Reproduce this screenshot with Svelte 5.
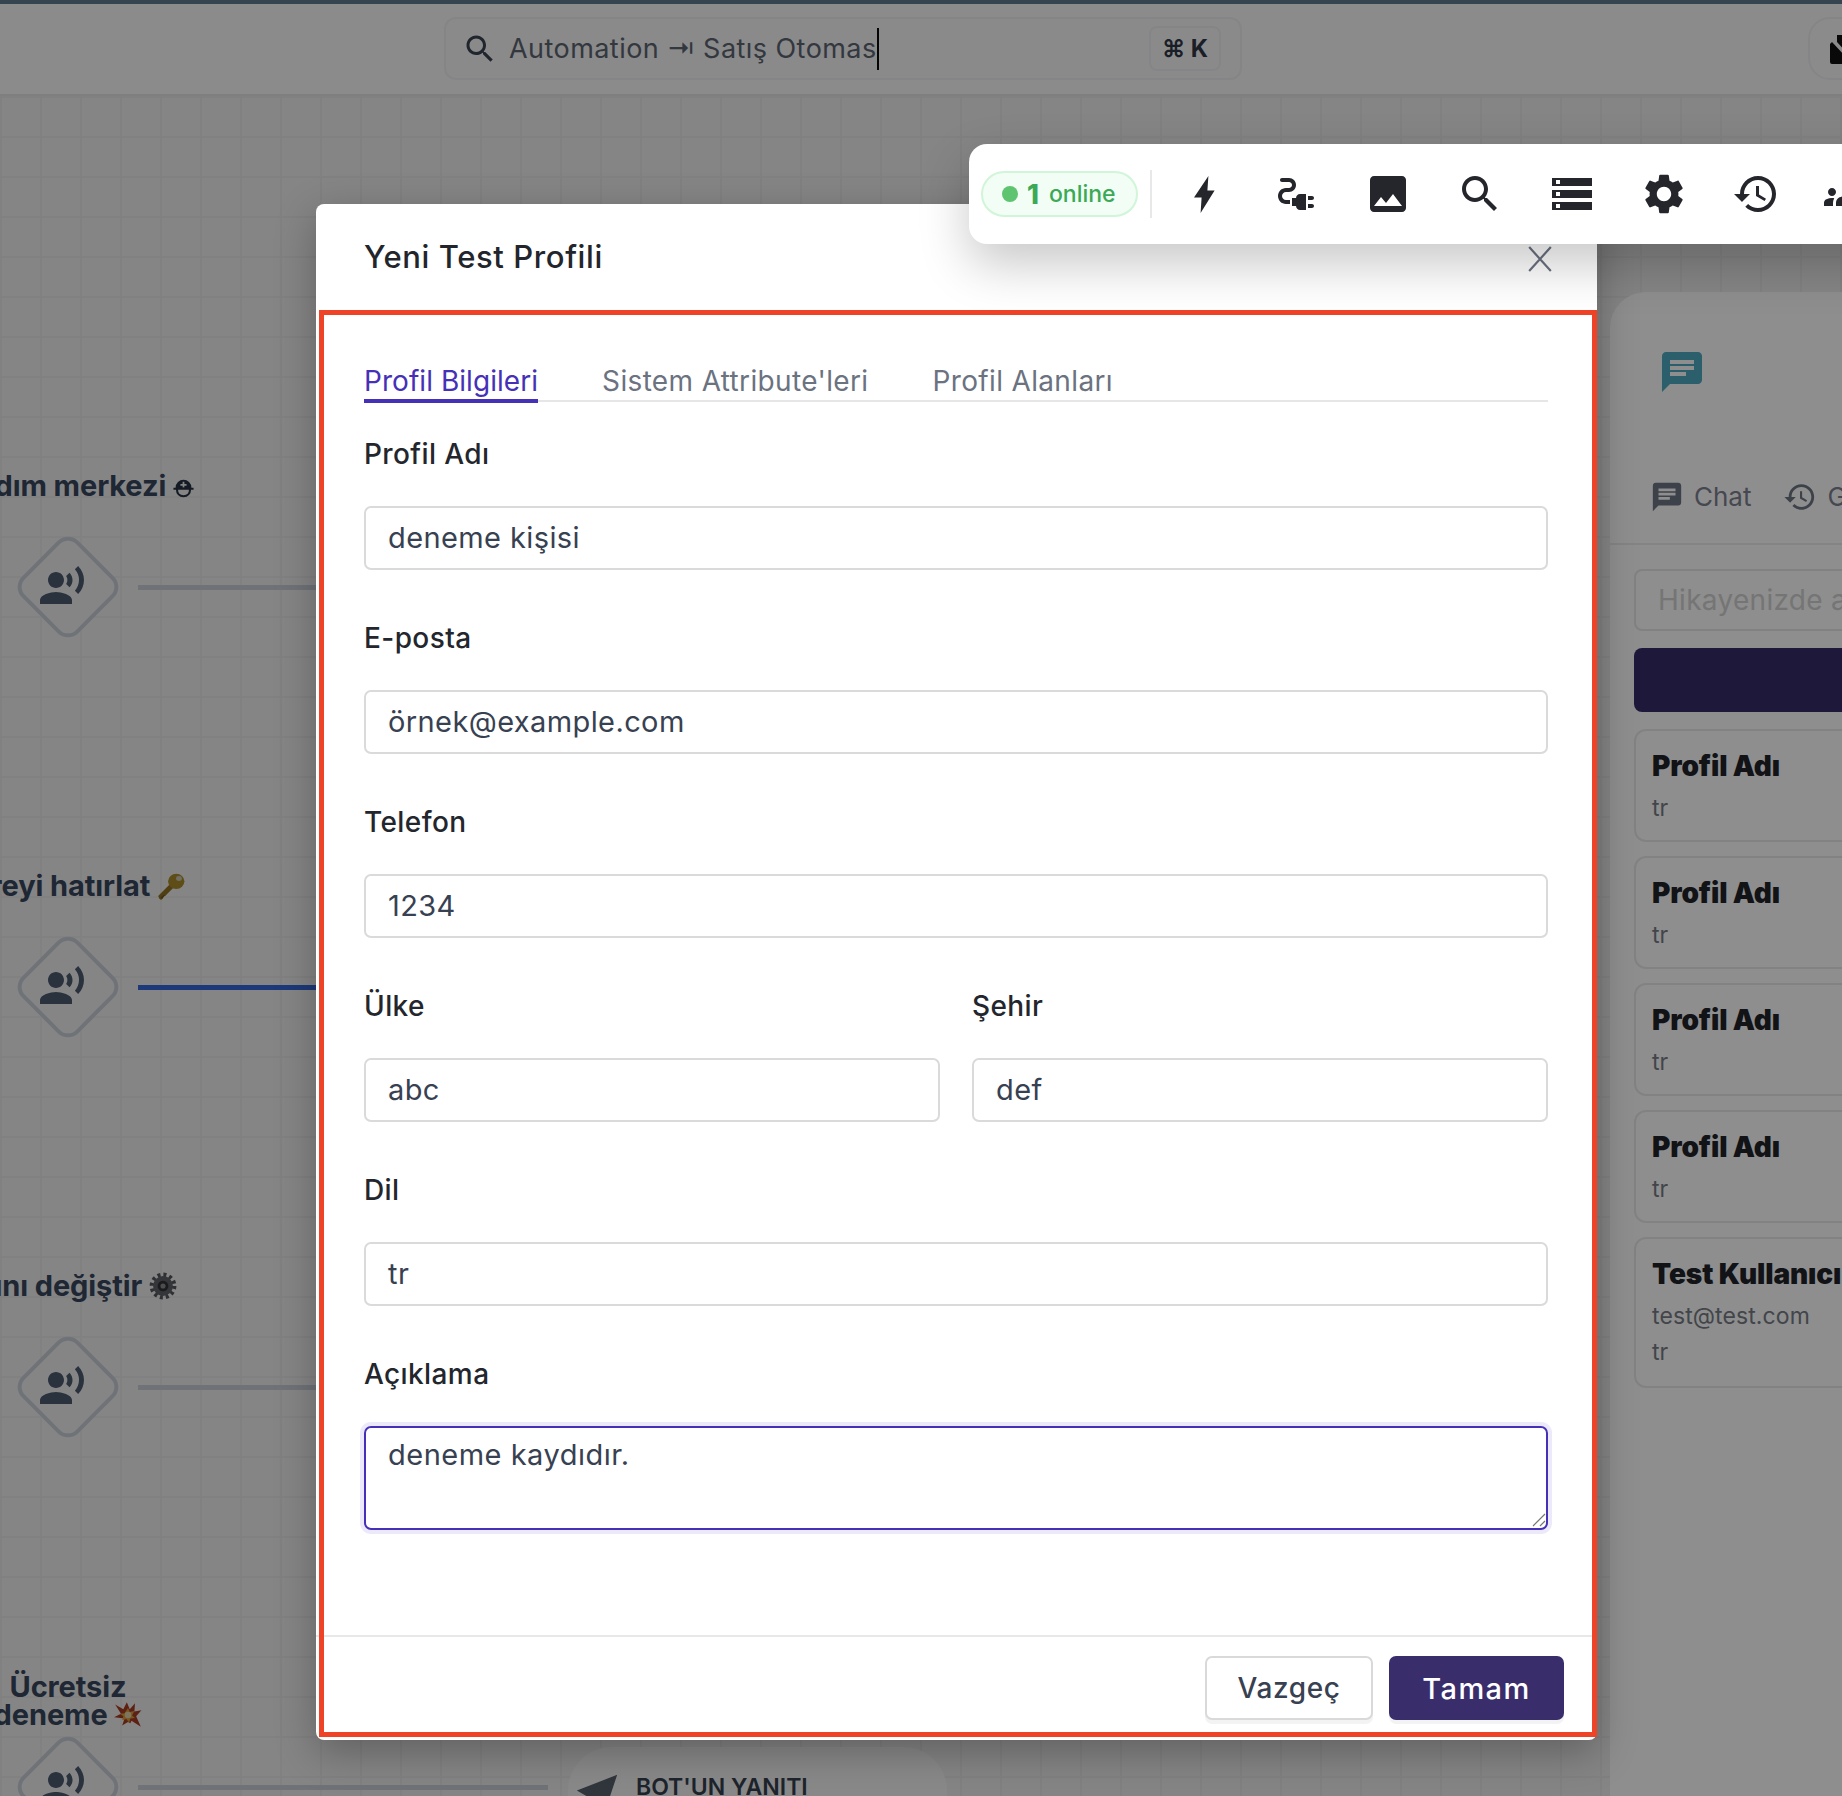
<script>
  const nodes = [
    { lines: ['Yardım merkezi'], emoji: 'helmet', y: 587, labelY: 486, line: '#c7ced6', width: 180, right: 194 },
    { lines: ['Şifreyi hatırlat'], emoji: 'key', y: 987, labelY: 886, line: '#3567d8', width: 180, right: 185 },
    { lines: ['Adını değiştir'], emoji: 'gear', y: 1387, labelY: 1286, line: '#c7ced6', width: 180, right: 177 },
    { lines: ['Ücretsiz', 'deneme'], emoji: 'boom', y: 1787, labelY: 1687, line: '#c7ced6', width: 410, right: 145, center: true }
  ];
  const fields = [
    { label: 'Profil Adı', value: 'deneme kişisi' },
    { label: 'E-posta', value: 'örnek@example.com' },
    { label: 'Telefon', value: '1234' }
  ];
  const cards = [
    { title: 'Profil Adı', lines: ['tr'] },
    { title: 'Profil Adı', lines: ['tr'] },
    { title: 'Profil Adı', lines: ['tr'] },
    { title: 'Profil Adı', lines: ['tr'] },
    { title: 'Test Kullanıcı', lines: ['test@test.com', 'tr'] }
  ];
  const P = {
    plug: 'M21 14c0-.55-.45-1-1-1h-2v2h2c.55 0 1-.45 1-1zm-1 3h-2v2h2c.55 0 1-.45 1-1s-.45-1-1-1zm-8-3h-2v4h2c0 1.1.9 2 2 2h3v-8h-3c-1.1 0-2 .9-2 2zM5 13c0-1.1.9-2 2-2h1.5c1.93 0 3.5-1.57 3.5-3.5S10.43 4 8.5 4H5c-.55 0-1 .45-1 1s.45 1 1 1h3.5c.83 0 1.5.67 1.5 1.5S9.33 9 8.5 9H7c-2.21 0-4 1.79-4 4s1.79 4 4 4h2v-2H7c-1.1 0-2-.9-2-2z',
    image: 'M21 19V5c0-1.1-.9-2-2-2H5c-1.1 0-2 .9-2 2v14c0 1.1.9 2 2 2h14c1.1 0 2-.9 2-2zM8.5 13.5l2.5 3.01L14.5 12l4.5 6H5l3.5-4.5z',
    search: 'M15.5 14h-.79l-.28-.27C15.41 12.59 16 11.11 16 9.5 16 5.91 13.09 3 9.5 3S3 5.91 3 9.5 5.91 16 9.5 16c1.61 0 3.09-.59 4.23-1.57l.27.28v.79l5 4.99L20.49 19l-4.99-5zm-6 0C7.01 14 5 11.99 5 9.5S7.01 5 9.5 5 14 7.01 14 9.5 11.99 14 9.5 14z',
    storage: 'M2 20h20v-4H2v4zm2-3h2v2H4v-2zM2 4v4h20V4H2zm4 3H4V5h2v2zm-4 7h20v-4H2v4zm2-3h2v2H4v-2z',
    settings: 'M19.14 12.94c.04-.3.06-.61.06-.94 0-.32-.02-.64-.07-.94l2.03-1.58c.18-.14.23-.41.12-.61l-1.92-3.32c-.12-.22-.37-.29-.59-.22l-2.39.96c-.5-.38-1.03-.7-1.62-.94l-.36-2.54c-.04-.24-.24-.41-.48-.41h-3.84c-.24 0-.43.17-.47.41l-.36 2.54c-.59.24-1.13.57-1.62.94l-2.39-.96c-.22-.08-.47 0-.59.22L2.74 8.87c-.12.21-.08.47.12.61l2.03 1.58c-.05.3-.09.63-.09.94s.02.64.07.94l-2.03 1.58c-.18.14-.23.41-.12.61l1.92 3.32c.12.22.37.29.59.22l2.39-.96c.5.38 1.03.7 1.62.94l.36 2.54c.05.24.24.41.48.41h3.84c.24 0 .44-.17.47-.41l.36-2.54c.59-.24 1.13-.56 1.62-.94l2.39.96c.22.08.47 0 .59-.22l1.92-3.32c.12-.22.07-.47-.12-.61l-2.01-1.58zM12 15.6c-1.98 0-3.6-1.62-3.6-3.6s1.62-3.6 3.6-3.6 3.6 1.62 3.6 3.6-1.62 3.6-3.6 3.6z',
    history: 'M13 3c-4.97 0-9 4.03-9 9H1l3.89 3.89.07.14L9 12H6c0-3.87 3.13-7 7-7s7 3.13 7 7-3.13 7-7 7c-1.93 0-3.68-.79-4.94-2.06l-1.42 1.42C8.27 19.99 10.51 21 13 21c4.97 0 9-4.03 9-9s-4.03-9-9-9zm-1 5v5l4.28 2.54.72-1.21-3.5-2.08V8H12z',
    groups: 'M12 12.75c1.63 0 3.07.39 4.24.9 1.08.48 1.76 1.56 1.76 2.73V18H6v-1.61c0-1.18.68-2.26 1.76-2.73 1.17-.52 2.61-.91 4.24-.91zM4 13c1.1 0 2-.9 2-2s-.9-2-2-2-2 .9-2 2 .9 2 2 2zm1.13 1.1C4.76 14.04 4.39 14 4 14c-.99 0-1.93.21-2.78.58C.48 14.9 0 15.62 0 16.43V18h4.5v-1.61c0-.83.23-1.61.63-2.29zM20 13c1.1 0 2-.9 2-2s-.9-2-2-2-2 .9-2 2 .9 2 2 2zm4 3.43c0-.81-.48-1.53-1.22-1.85C21.93 14.21 20.99 14 20 14c-.39 0-.76.04-1.13.1.4.68.63 1.46.63 2.29V18H24v-1.57zM12 6c1.66 0 3 1.34 3 3s-1.34 3-3 3-3-1.34-3-3 1.34-3 3-3z',
    chat: 'M20 2H4c-1.1 0-1.99.9-1.99 2L2 22l4-4h14c1.1 0 2-.9 2-2V4c0-1.1-.9-2-2-2zM6 9h12v2H6V9zm8 5H6v-2h8v2zm4-6H6V6h12v2z',
    voice: 'M9 13c2.21 0 4-1.79 4-4s-1.79-4-4-4-4 1.79-4 4 1.79 4 4 4zm0 2c-2.67 0-8 1.34-8 4v2h16v-2c0-2.66-5.33-4-8-4zm6.76-9.64l-1.68 1.69c.84 1.18.84 2.71 0 3.89l1.68 1.69c2.02-2.02 2.02-5.07 0-7.27zM20.07 2l-1.63 1.63c2.77 3.02 2.77 7.56 0 10.74L20.07 16c3.9-3.89 3.91-9.95 0-14z',
    bolt: 'M14.2 3 7 13.8h3.800L10.300 21.500l7-11.200h-3.600z'
  };
  const tools = [P.bolt, P.plug, P.image, P.search, P.storage, P.settings, P.history, P.groups];
</script>

<div class="page">
  <header class="topbar">
    <div class="search">
      <svg class="search-icon" viewBox="0 0 24 24"><path d={P.search} /></svg>
      <span class="search-text">Automation ⇥ Satış Otomas</span><span class="caret"></span>
      <kbd class="kbd">⌘ K</kbd>
    </div>
    <div class="corner">
      <svg viewBox="0 0 34 34" class="corner-icon">
        <path d="M1 11v18a2 2 0 0 0 2 2h30V24L17 24 3 9z" />
        <path d="M8 2h26v20H20L8 9z" />
        <path d="M22 7h12M22 12h12" stroke="#f8f8fa" stroke-width="2.500" fill="none" />
      </svg>
    </div>
  </header>

  <main class="canvas">
    {#each nodes as n}
      <div class="node-label" class:center={n.center} style="top:{n.labelY - 96 - 14}px;left:{n.right - 300}px">
        {#each n.lines as l, i}
          <div>{l}
            {#if i === n.lines.length - 1}
              {#if n.emoji === 'helmet'}
                <svg class="emoji helmet" viewBox="0 0 24 24"><path d="M3 13v-1a9 9 0 0 1 18 0v1zM11 5.500v2.500H8.500v2H11v2h2v-2h2.500V8H13V5.500z" fill-rule="evenodd" fill="#253040" /><path d="M.500 13.500h23M4.500 14c0 5 3 8 7.500 8s7.500-3 7.500-8" fill="none" stroke="#253040" stroke-width="2.400" /></svg>
              {:else if n.emoji === 'key'}
                <svg class="emoji" viewBox="0 0 24 24"><path d="M1 20.500 11 10.500l3 3-7 7-1-1-1.500 1.500 1 1-2 2-1.500-1z" fill="#8f7020" /><path d="M3 22 6 19l1 1-2.500 3z" fill="#6e5618" /><ellipse cx="16.500" cy="8" rx="7" ry="6.500" fill="#a98a2a" /><ellipse cx="18.800" cy="5.600" rx="2.500" ry="2.100" fill="#c9c6b4" /></svg>
              {:else if n.emoji === 'gear'}
                <svg class="emoji" viewBox="0 0 24 24"><circle cx="12" cy="12" r="9.500" fill="none" stroke="#55575c" stroke-width="4" stroke-dasharray="2.500 2.480" /><circle cx="12" cy="12" r="8.500" fill="#5f6166" /><circle cx="12" cy="12" r="4.600" fill="#2f3135" /><circle cx="12" cy="12" r="2.200" fill="#8a8a8a" /></svg>
              {:else}
                <svg class="emoji" viewBox="0 0 24 24"><path d="m11 1 2.500 6L18 2l-.5 7 6-1-4.500 5 4 9-8-5-1 2-2-1-5 3 2-6-9-1 6-3-5-8 7 4z" fill="#a63c22" /><path d="m12 6 1.500 3.500 4-1-2 4 2.500 2-4 .5-1 3.500-2.500-3-3.500 1 1-3.500-3-2 4-.5z" fill="#d99a3a" /><circle cx="12" cy="12" r="2.800" fill="#dbd3a6" /></svg>
              {/if}
            {/if}
          </div>
        {/each}
      </div>
      <div class="diamond" style="top:{n.y - 96 - 50}px">
        <span class="diamond-shape"></span>
        <svg viewBox="0 0 24 24" class="voice"><path d={P.voice} /></svg>
      </div>
      <div class="link" style="top:{n.y - 96 - 2.5}px;width:{n.width}px;background:{n.line}"></div>
    {/each}

    <div class="bot">
      <svg viewBox="0 0 24 24" class="plane"><path d="M23 1 1 9.500l6 3.500 1 8 4-5 5 3z" /></svg>
      <span>BOT'UN YANITI</span>
    </div>

    <aside class="panel">
      <svg viewBox="0 0 24 24" class="panel-logo"><path d={P.chat} /></svg>
      <nav class="panel-tabs">
        <span class="panel-tab"><svg viewBox="0 0 24 24"><path d={P.chat} /></svg>Chat</span>
        <span class="panel-tab"><svg viewBox="0 0 24 24"><path d={P.history} /></svg>Geçmiş</span>
      </nav>
      <div class="panel-body">
        <div class="panel-input">Hikayenizde ara</div>
        <div class="panel-btn"></div>
        {#each cards as c}
          <div class="card">
            <div class="card-title">{c.title}</div>
            {#each c.lines as l}<div class="card-line">{l}</div>{/each}
          </div>
        {/each}
      </div>
    </aside>
  </main>

  <div class="backdrop"></div>

  <section class="modal">
    <div class="modal-head">
      <h2>Yeni Test Profili</h2>
      <svg viewBox="0 0 24 24" class="close"><path d="M2 1l20 22M22 1 2 23" /></svg>
    </div>
    <div class="modal-body">
      <div class="tabs">
        <span class="tab active">Profil Bilgileri</span>
        <span class="tab">Sistem Attribute'leri</span>
        <span class="tab">Profil Alanları</span>
      </div>
      <div class="fields">
        {#each fields as f}
          <div class="field">
            <div class="label">{f.label}</div>
            <div class="input">{f.value}</div>
          </div>
        {/each}
        <div class="row">
          <div class="field">
            <div class="label">Ülke</div>
            <div class="input">abc</div>
          </div>
          <div class="field">
            <div class="label">Şehir</div>
            <div class="input">def</div>
          </div>
        </div>
        <div class="field">
          <div class="label">Dil</div>
          <div class="input">tr</div>
        </div>
        <div class="field">
          <div class="label">Açıklama</div>
          <div class="textarea">
            deneme kaydıdır.
            <svg viewBox="0 0 14 14" class="grip"><path d="M13 1 1 13M13 8 8 13" /></svg>
          </div>
        </div>
      </div>
    </div>
    <div class="modal-foot">
      <button class="btn ghost">Vazgeç</button>
      <button class="btn primary">Tamam</button>
    </div>
  </section>

  <div class="annotation"></div>

  <div class="toolbar">
    <div class="pill"><i class="dot"></i><b>1</b><span>online</span></div>
    <i class="sep"></i>
    {#each tools as t}
      <span class="tool"><svg viewBox="0 0 24 24"><path d={t} /></svg></span>
    {/each}
  </div>
</div>

<style>
  :global(body) { margin: 0; font-family: Inter, "Noto Sans", sans-serif; }
  .page { position: relative; width: 1842px; height: 1796px; overflow: hidden; display: flex; flex-direction: column; background: #eeeeee; }
  .topbar { flex: none; height: 96px; box-sizing: border-box; border-top: 4px solid #5f7b8e; border-bottom: 2px solid #e3e3e3; background: #f8f8fa; display: flex; align-items: flex-start; padding: 13px 0 0 444px; }
  .search { flex: none; width: 798px; height: 63px; box-sizing: border-box; border: 2px solid #eeeef0; border-radius: 12px; display: flex; align-items: center; padding-left: 16px; background: #f6f6f8; }
  .search-icon { width: 36px; height: 36px; fill: #3b4350; flex: none; }
  .search-text { margin-left: 11px; font-size: 27px; letter-spacing: .45px; color: #5b6470; white-space: nowrap; }
  .caret { width: 2px; height: 42px; background: #0a0a0a; flex: none; }
  .kbd { margin-left: auto; margin-right: 19px; width: 72px; height: 45px; box-sizing: border-box; border: 2px solid #eeeef0; border-radius: 8px; font: 700 24px Inter, sans-serif; color: #2f3846; display: flex; align-items: center; justify-content: center; }
  .corner { flex: none; margin-left: 566px; width: 80px; height: 63px; box-sizing: border-box; border: 2px solid #eeeef0; border-radius: 22px; padding: 14px 0 0 19px; }
  .corner-icon { width: 34px; height: 34px; fill: #111; display: block; }

  .canvas { flex: 1; position: relative; overflow: hidden; display: flex; background-color: #eeeeee; background-image: linear-gradient(#e6e6e6 2px, transparent 2px), linear-gradient(90deg, #e6e6e6 2px, transparent 2px); background-size: 40px 40px; }
  .node-label { position: absolute; width: 300px; text-align: right; font-size: 29px; line-height: 28px; font-weight: 700; color: #36475c; white-space: nowrap; letter-spacing: -.1px; }
  .node-label.center { width: 154px; margin-left: 146px; text-align: center; }
  .emoji { width: 28px; height: 28px; vertical-align: -4px; }
  .emoji.helmet { width: 21px; height: 21px; vertical-align: -2px; }
  .diamond { position: absolute; left: 18px; width: 100px; height: 100px; display: flex; align-items: center; justify-content: center; }
  .diamond-shape { position: absolute; left: 10px; top: 10px; width: 80px; height: 80px; box-sizing: border-box; border: 4px solid #c7ced6; border-radius: 15px; transform: rotate(45deg); background: #eeeeee; }
  .voice { position: relative; width: 48px; height: 48px; fill: #4b5a6e; margin: -2px 12px 0 0; }
  .link { position: absolute; left: 138px; height: 5px; }
  .bot { position: absolute; left: 568px; top: 1651px; width: 379px; height: 140px; border-radius: 44px; background: #f4f4f4; display: flex; align-items: flex-start; padding: 26px 0 0 7px; box-sizing: border-box; font-size: 23px; font-weight: 600; color: #36414f; gap: 17px; }
  .plane { width: 44px; height: 44px; fill: #57606c; flex: none; }
  .panel { margin: 196px 0 0 1610px; flex: 0 0 500px; background: #fdfdfd; border-radius: 36px 0 0 0; display: flex; flex-direction: column; }
  .panel-logo { flex: none; width: 48px; height: 48px; fill: #4da9c0; margin: 56px 0 0 48px; }
  .panel-tabs { flex: none; display: flex; gap: 32px; margin: 84px 0 0 40px; height: 63px; align-items: flex-start; font-size: 26px; line-height: 34px; color: #7c8190; }
  .panel-tab { display: flex; align-items: center; gap: 10px; }
  .panel-tab svg { width: 34px; height: 34px; fill: #6d7584; }
  .panel-body { border-top: 2px solid #ebebeb; padding: 24px 24px 0; display: flex; flex-direction: column; gap: 14px; }
  .panel-input { height: 62px; box-sizing: border-box; border: 2px solid #e6e6e6; border-radius: 8px; padding: 0 22px; font-size: 28px; letter-spacing: .3px; line-height: 58px; color: #d0d0d0; }
  .panel-btn { height: 64px; border-radius: 8px; background: #362d69; margin: 3px 0; }
  .card { box-sizing: border-box; border: 2px solid #e8e8e8; border-radius: 12px; padding: 17px 16px 14px; }
  .card:last-child { padding-bottom: 16px; }
  .card-title { font-size: 28px; line-height: 36px; font-weight: 900; color: #202228; margin-bottom: 6px; white-space: nowrap; letter-spacing: -.1px; }
  .card-line { font-size: 23px; line-height: 36px; color: #777c85; letter-spacing: .1px; }

  .backdrop { position: absolute; inset: 0; background: rgba(0, 0, 0, .44); }

  .modal { position: absolute; left: 316px; top: 204px; width: 1281px; height: 1536px; box-sizing: border-box; background: #fff; border-radius: 8px; display: flex; flex-direction: column; box-shadow: 0 12px 40px rgba(0, 0, 0, .28); }
  .modal-head { flex: none; height: 106px; display: flex; align-items: flex-start; padding: 30px 44px 0 48px; justify-content: space-between; }
  .modal-head h2 { margin: 0; font-size: 31px; line-height: 46px; font-weight: 500; color: #22252b; letter-spacing: .6px; }
  .close { width: 26px; height: 26px; margin-top: 12px; fill: none; stroke: #6b7280; stroke-width: 2; }
  .modal-body { flex: 1; padding: 0 49px 0 48px; display: flex; flex-direction: column; }
  .tabs { flex: none; margin-top: 23px; display: flex; gap: 64px; height: 37px; border-bottom: 2px solid #e6e6e6; font-size: 28px; line-height: 36px; color: #6b7280; letter-spacing: .35px; }
  .tab { height: 36px; white-space: nowrap; }
  .tab.active { color: #4530b8; border-bottom: 4px solid #4530b8; letter-spacing: .05px; }
  .fields { padding-top: 35px; display: flex; flex-direction: column; }
  .field { display: flex; flex-direction: column; }
  .row { display: flex; gap: 32px; }
  .row .field { flex: 1 1 0; }
  .label { height: 32px; margin-bottom: 37px; font-size: 28px; line-height: 35px; font-weight: 500; color: #23262d; letter-spacing: .4px; }
  .input { height: 64px; box-sizing: border-box; border: 2px solid #dadada; border-radius: 7px; padding: 0 22px; font-size: 29px; letter-spacing: .4px; line-height: 60px; color: #374151; margin-bottom: 51px; }
  .textarea { position: relative; height: 104px; box-sizing: border-box; border: 2px solid #4530b8; border-radius: 7px; padding: 9px 22px; font-size: 29px; letter-spacing: .5px; line-height: 36px; color: #374151; box-shadow: 0 0 0 4px #ece9fb; }
  .grip { position: absolute; right: 0; bottom: 1px; width: 14px; height: 14px; fill: none; stroke: #777; stroke-width: 1.200; }
  .modal-foot { flex: none; height: 105px; box-sizing: border-box; border-top: 2px solid #e8e8e8; display: flex; justify-content: flex-end; gap: 16px; padding: 19px 33px 0 0; }
  .btn { height: 64px; box-sizing: border-box; border-radius: 7px; font: 500 28px Inter, sans-serif; letter-spacing: .6px; box-shadow: 0 4px 0 #f3f3f3; }
  .ghost { width: 168px; background: #fff; color: #374151; border: 2px solid #d9d9d9; }
  .primary { width: 175px; background: #3a2d6b; color: #fff; border: 0; letter-spacing: 1.4px; font-size: 29px; }
  .annotation { position: absolute; left: 319px; top: 310px; width: 1278px; height: 1427px; box-sizing: border-box; border: 5px solid #ee4326; pointer-events: none; }

  .toolbar { position: absolute; left: 969px; top: 144px; width: 960px; height: 100px; background: #fff; border-radius: 18px; box-shadow: 0 20px 50px rgba(0, 0, 0, .22); display: flex; align-items: center; padding-left: 12px; box-sizing: border-box; }
  .pill { width: 157px; height: 46px; box-sizing: border-box; border: 2px solid #d1f5d8; background: #f2fdf5; border-radius: 23px; display: flex; align-items: center; padding-left: 19px; color: #3ba955; font-size: 23px; font-weight: 500; flex: none; }
  .dot { width: 16px; height: 16px; border-radius: 50%; background: #5ec46f; margin-right: 9px; }
  .pill b { font-size: 27px; font-weight: 800; margin-right: 10px; }
  .sep { width: 2px; height: 48px; background: #e8e8e8; margin: 0 6px 0 12px; flex: none; }
  .tool { flex: 0 0 92px; display: flex; justify-content: center; }
  .tool svg { width: 48px; height: 48px; fill: #24262c; }
</style>
